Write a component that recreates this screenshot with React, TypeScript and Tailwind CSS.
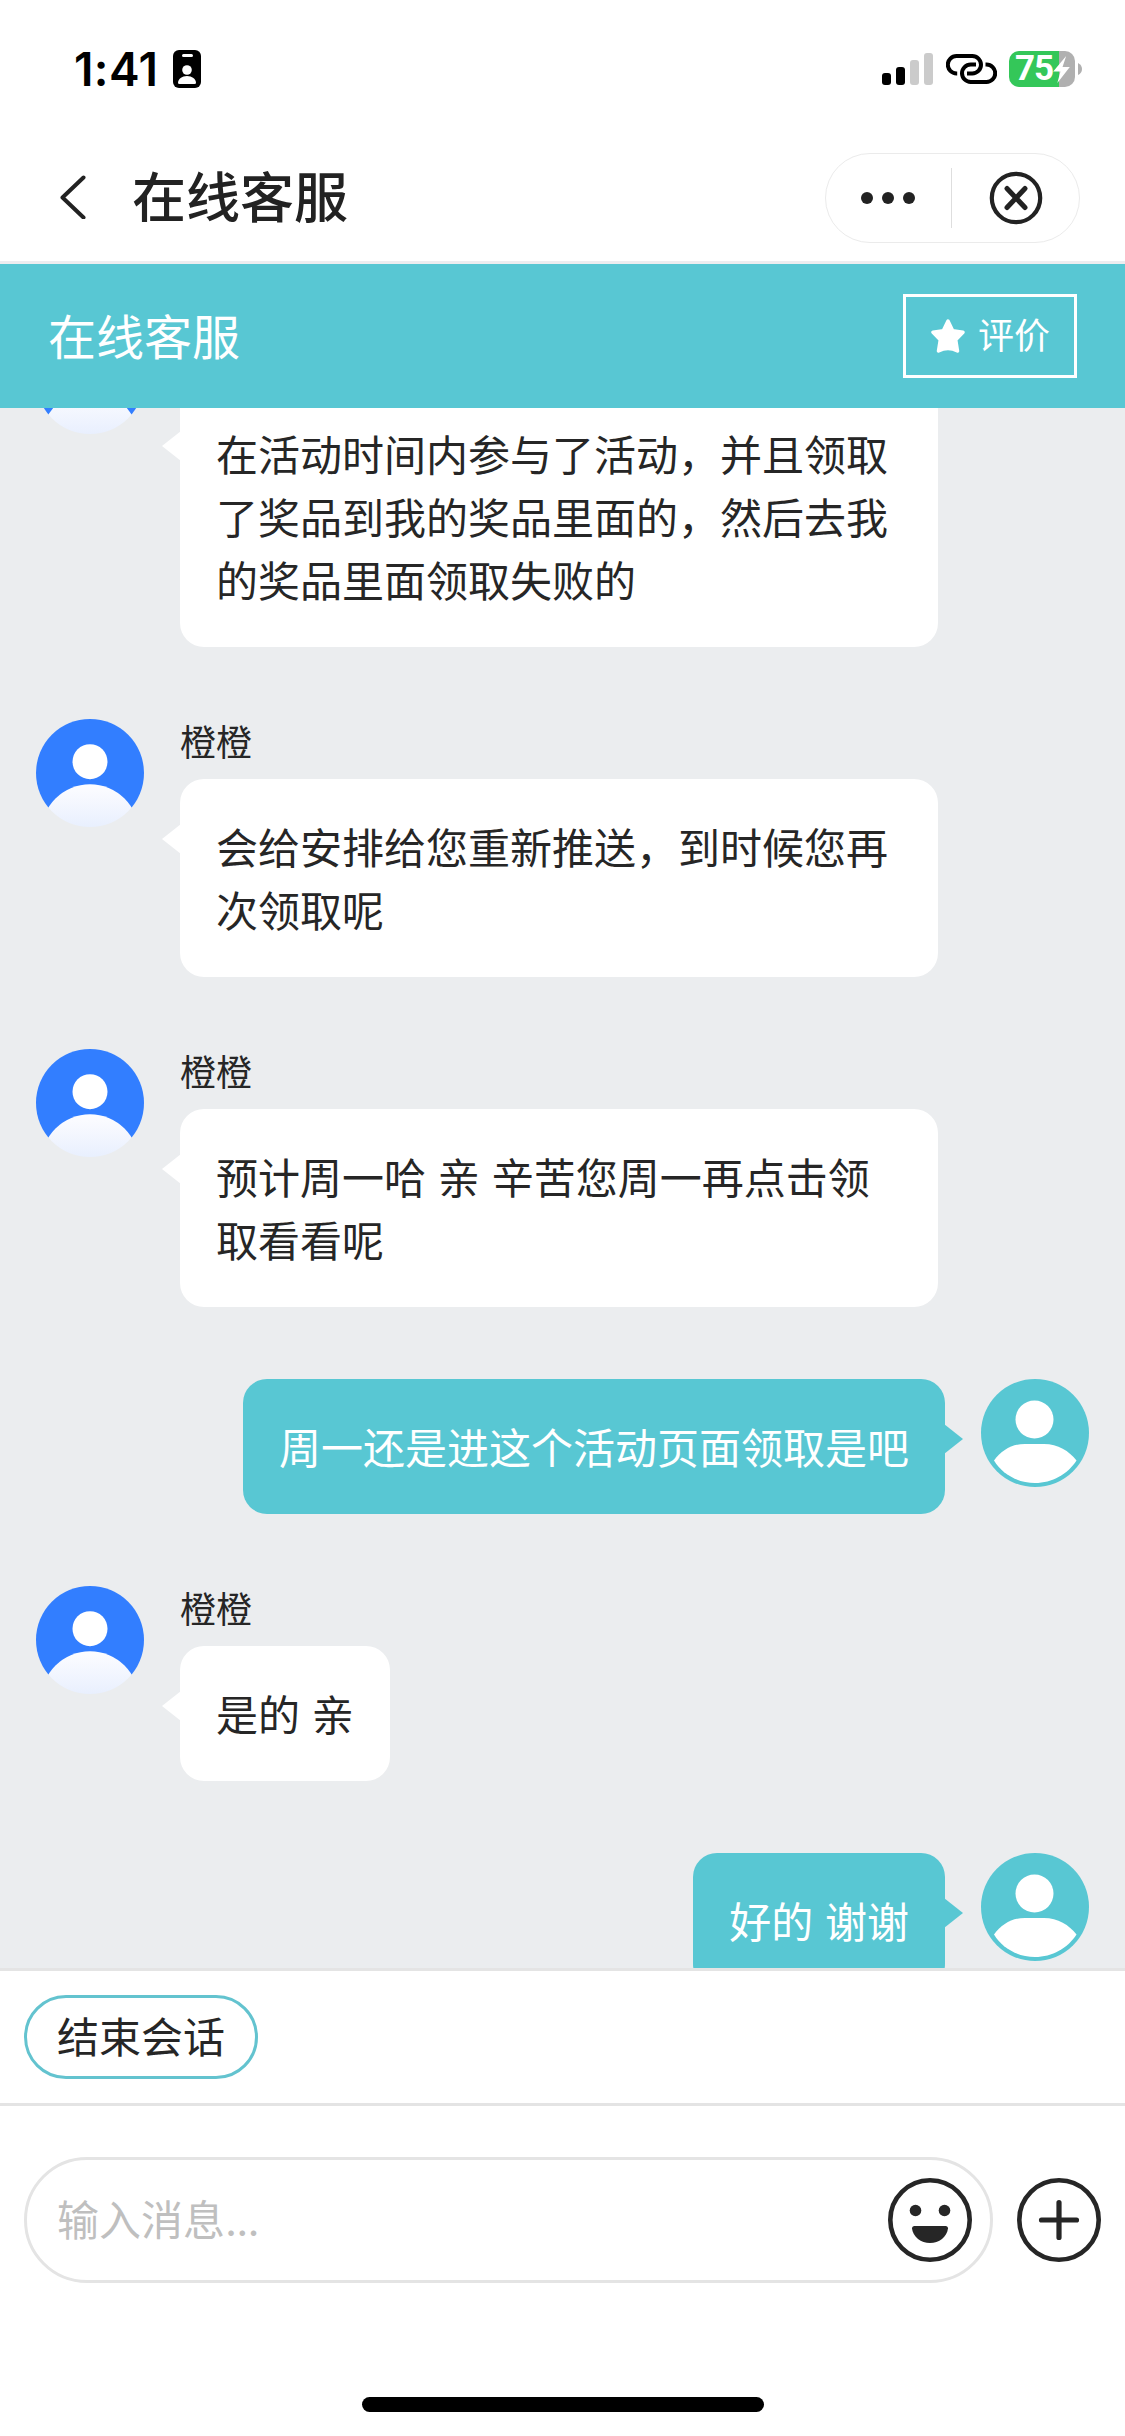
import React from "react";

function StatusBar() {
  return (
    <div className="flex h-[132px] items-start justify-between pl-[74px] pr-[43px] pt-[50px] text-black">
      <div className="flex items-start">
        <span className="h-[38px] w-[99px] whitespace-nowrap text-[46px] font-semibold leading-[38px] tracking-[0.400px]">1:41</span>
        <svg width="28" height="38" viewBox="0 0 28 38">
          <rect width="28" height="38" rx="6" fill="#000" />
          <rect x="9" y="4" width="11" height="3" rx="1.5" fill="#fff" />
          <circle cx="14" cy="20" r="4.8" fill="#fff" />
          <path d="M5 33c0-4 4-7 9-7s9 3 9 7q0 1-1.500 1h-15q-1.500 0-1.500-1z" fill="#fff" />
        </svg>
      </div>
      <div className="flex items-start">
        <svg className="mt-[3px]" width="51" height="32" viewBox="0 0 51 32">
          <rect x="0" y="20" width="9" height="12" rx="3" fill="#000" />
          <rect x="14" y="14" width="9" height="18" rx="3" fill="#000" />
          <rect x="28" y="7" width="9" height="25" rx="3" fill="#cbcbcb" />
          <rect x="42" y="0" width="9" height="32" rx="3" fill="#cbcbcb" />
        </svg>
        <svg className="ml-[13px] mt-[4px]" width="51" height="30" viewBox="0 0 51 30" fill="none" stroke="#000" strokeWidth="4" strokeLinecap="butt">
          <path d="M11.200 19.400H10.500A8.700 8.700 0 0 1 10.500 2H26.300A8.700 8.700 0 0 1 26.300 19.400H21" />
          <path d="M30 10.600H24.700A8.700 8.700 0 0 0 24.700 28H40.500A8.700 8.700 0 0 0 40.500 10.600H39.500" />
        </svg>
        <div className="ml-[12px] mt-[1px] flex h-[36px] items-center">
          <div className="flex h-[36px] w-[66px] items-center rounded-[10px] bg-[linear-gradient(90deg,#34c759_50px,#b0b0b0_50px)] pl-[6px]">
            <span className="w-[38px] whitespace-nowrap font-['Roboto',sans-serif] text-[35px] font-bold leading-[36px] tracking-[-1px] text-white">75</span>
            <svg width="17" height="27" viewBox="0 0 16 26">
              <path d="M12.500 0L0 15h7L4 26 16 10.500H9z" fill="#fff" />
            </svg>
          </div>
          <svg className="ml-[3px]" width="4" height="12" viewBox="0 0 4 12">
            <path d="M0 0q4 2 4 6t-4 6z" fill="#b0b0b0" />
          </svg>
        </div>
      </div>
    </div>
  );
}

function NavBar() {
  return (
    <div className="flex h-[132px] items-center border-b-[3px] border-[#ededf0] pl-[59px] pr-[45px]">
      <svg width="28" height="44" viewBox="0 0 28 44" fill="none" stroke="#222" strokeWidth="4" strokeLinecap="round" strokeLinejoin="round">
        <path d="M24.500 4L3.500 24l21 20" transform="translate(0 -1.500)" />
      </svg>
      <h1 className="ml-[45px] flex-1 pt-[5px] text-[54px] font-medium leading-[72px] text-[#222]">在线客服</h1>
      <div className="mt-[3px] flex h-[90px] w-[255px] items-center rounded-full border border-[#ebebeb]">
        <div className="flex w-[125px] items-center gap-[9px] pl-[35px]">
          <i className="size-[12px] shrink-0 rounded-full bg-[#222]" />
          <i className="size-[12px] shrink-0 rounded-full bg-[#222]" />
          <i className="size-[12px] shrink-0 rounded-full bg-[#222]" />
        </div>
        <div className="h-[60px] w-px bg-[#dedede]" />
        <div className="flex w-[127px] justify-center">
          <svg width="54" height="54" viewBox="0 0 54 54" fill="none" stroke="#222" strokeLinecap="round">
            <circle cx="27" cy="27" r="24.200" strokeWidth="4.200" />
            <path d="M18 17.500l18 19M36 17.500l-18 19" strokeWidth="5" />
          </svg>
        </div>
      </div>
    </div>
  );
}

function ServiceHeader() {
  return (
    <div className="relative z-10 flex h-[144px] shrink-0 items-center justify-between bg-[#58c7d3] px-[48px] text-white">
      <span className="pt-[3px] text-[48px] leading-[72px]">在线客服</span>
      <button className="flex h-[84px] w-[174px] items-center border-[3px] border-white pl-[25px] text-[36px] leading-[54px]">
        <svg className="mr-[13px] shrink-0" width="34" height="36" viewBox="0 0 34 36">
          <path d="M17 3l4.700 9.700 10.300 1.600-7.300 7.600 1.800 11.100q-9.500-4.800-19 0l1.800-11.100L2 14.300l10.300-1.600z" fill="#fff" stroke="#fff" strokeWidth="3.500" strokeLinejoin="round" />
        </svg>
        评价
      </button>
    </div>
  );
}

function AgentAvatar() {
  return (
    <svg className="shrink-0" width="108" height="108" viewBox="0 0 108 108">
      <defs>
        <clipPath id="agentClip"><circle cx="54" cy="54" r="54" /></clipPath>
        <linearGradient id="agentBody" x1="0" y1="0" x2="0" y2="1">
          <stop offset="0" stopColor="#fdfdff" />
          <stop offset="0.450" stopColor="#e8effe" />
        </linearGradient>
      </defs>
      <g clipPath="url(#agentClip)">
        <rect width="108" height="88.500" fill="#327eff" />
        <circle cx="54" cy="42.700" r="17.500" fill="#fff" />
        <circle cx="54" cy="114" r="48.800" fill="url(#agentBody)" />
      </g>
    </svg>
  );
}

function UserAvatar() {
  return (
    <svg className="shrink-0" width="108" height="108" viewBox="0 0 108 108">
      <circle cx="54" cy="54" r="54" fill="#58c7d3" />
      <circle cx="53.500" cy="40.500" r="19" fill="#fff" />
      <path d="M44 65h19c14 0 25 7 32.500 16.500C87 95 71 104 54 104S21 95 13 81.500C21 71 31 65 44 65z" fill="#fff" />
    </svg>
  );
}

function AgentMessage({ name, text }: { name?: string; text: string }) {
  return (
    <div className="flex items-start gap-[36px]">
      <AgentAvatar />
      <div className="flex flex-col items-start">
        <div className="h-[60px] text-[36px] leading-[48px]">{name}</div>
        <div className="relative max-w-[758px] rounded-[24px] bg-white px-[36px] pb-[34px] pt-[38px] text-[42px] leading-[63px]">
          <svg className="absolute -left-[18px] top-[45px]" width="19" height="30" viewBox="0 0 19 30">
            <path d="M19 0v30L0 15z" fill="#fff" />
          </svg>
          {text}
        </div>
      </div>
    </div>
  );
}

function UserMessage({ text }: { text: string }) {
  return (
    <div className="flex items-start justify-end gap-[36px]">
      <div className="relative max-w-[758px] rounded-[24px] bg-[#58c7d3] px-[36px] pb-[34px] pt-[38px] text-[42px] leading-[63px] text-white">
        {text}
        <svg className="absolute -right-[18px] top-[45px]" width="19" height="30" viewBox="0 0 19 30">
          <path d="M0 0v30l19-15z" fill="#58c7d3" />
        </svg>
      </div>
      <UserAvatar />
    </div>
  );
}

const messages: { from: "agent" | "user"; name?: string; text: string }[] = [
  { from: "agent", text: "在活动时间内参与了活动，并且领取了奖品到我的奖品里面的，然后去我的奖品里面领取失败的" },
  { from: "agent", name: "橙橙", text: "会给安排给您重新推送，到时候您再次领取呢" },
  { from: "agent", name: "橙橙", text: "预计周一哈 亲 辛苦您周一再点击领取看看呢" },
  { from: "user", text: "周一还是进这个活动页面领取是吧" },
  { from: "agent", name: "橙橙", text: "是的 亲" },
  { from: "user", text: "好的 谢谢" },
];

function Composer() {
  return (
    <div className="flex h-[330px] items-start gap-[24px] px-[24px] pt-[51px]">
      <div className="flex h-[126px] flex-1 items-center justify-between rounded-full border-[3px] border-[#e4e4e4] pl-[30px] pr-[18px]">
        <span className="text-[42px] leading-[63px] text-[#bfbfbf]">
          输入消息<span className="tracking-[-0.800px]">...</span>
        </span>
        <svg width="84" height="84" viewBox="0 0 84 84">
          <circle cx="42" cy="42" r="39.700" fill="none" stroke="#262626" strokeWidth="4.600" />
          <circle cx="27.500" cy="32.500" r="5.800" fill="#262626" />
          <circle cx="56.500" cy="32.500" r="5.800" fill="#262626" />
          <path d="M26.500 48h31q2.500 0 2.500 2.500C59 59 51 65 42 65S25 59 24 50.500Q24 48 26.500 48z" fill="#262626" />
        </svg>
      </div>
      <svg className="mt-[21px]" width="84" height="84" viewBox="0 0 84 84" fill="none" stroke="#262626" strokeLinecap="round">
        <circle cx="42" cy="42" r="39.700" strokeWidth="4.600" />
        <path d="M42 24.500v35M24.500 42h35" strokeWidth="5.200" />
      </svg>
    </div>
  );
}

export default function App() {
  return (
    <div className="flex h-[2436px] w-[1125px] flex-col overflow-hidden bg-white font-['Inter','Noto_Sans_CJK_SC',sans-serif] text-[#262626]">
      <StatusBar />
      <NavBar />
      <ServiceHeader />
      <main className="h-[1560px] shrink-0 overflow-hidden bg-[#ebedef] px-[36px]">
        <div className="-mt-[82px] flex flex-col gap-[72px]">
          {messages.map((m, i) =>
            m.from === "agent" ? (
              <AgentMessage key={i} name={m.name} text={m.text} />
            ) : (
              <UserMessage key={i} text={m.text} />
            )
          )}
        </div>
      </main>
      <div className="flex h-[138px] shrink-0 items-center border-y-[3px] border-[#e4e4e4] px-[24px]">
        <button className="flex h-[84px] items-center rounded-full border-[3px] border-[#63c3cf] px-[30px] text-[42px] leading-[63px]">结束会话</button>
      </div>
      <Composer />
      <div className="mx-auto mt-[-39px] h-[15px] w-[402px] shrink-0 rounded-full bg-black" />
    </div>
  );
}
